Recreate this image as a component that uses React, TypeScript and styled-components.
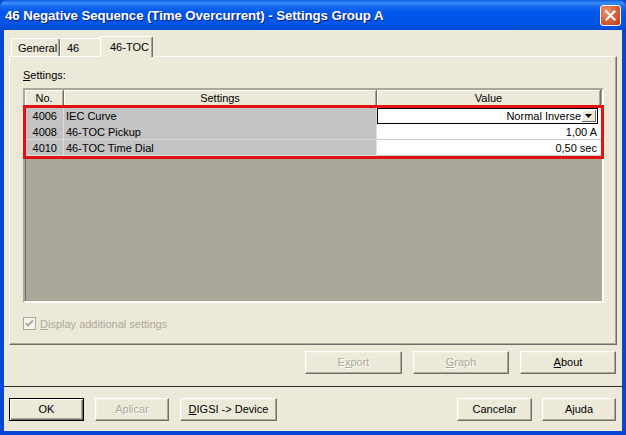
import React from "react";
import styled, { createGlobalStyle, css } from "styled-components";

const GlobalStyle = createGlobalStyle`
  html, body { margin: 0; padding: 0; background: #ECE9D8; }
  body { font-family: "Liberation Sans", Arial, sans-serif; font-size: 11px; color: #000; }
  * { box-sizing: border-box; }
`;

const Window = styled.div`
  width: 626px;
  height: 435px;
  display: flex;
  flex-direction: column;
  background: #0846d8;
  overflow: hidden;
`;

const TitleBar = styled.div`
  height: 30px;
  flex: none;
  display: flex;
  align-items: center;
  justify-content: space-between;
  padding: 0 5px 0 5px;
  background: linear-gradient(
    to bottom,
    #0a5ee0 0%,
    #3c8df5 10%,
    #1669ef 22%,
    #0058ee 40%,
    #0055e5 80%,
    #0048d2 100%
  );
  border-radius: 7px 7px 0 0;
`;

const TitleText = styled.span`
  color: #fff;
  font-family: "Liberation Sans", Arial, sans-serif;
  font-weight: bold;
  font-size: 13.3px;
  letter-spacing: -0.1px;
  text-shadow: 1px 1px 0 #0a1e80;
  white-space: nowrap;
`;

const CloseButton = styled.div`
  width: 21px;
  height: 21px;
  margin-top: 1px;
  border: 1px solid #fff;
  border-radius: 3px;
  background: radial-gradient(circle at 30% 30%, #ec9a7f 0%, #d9643f 45%, #c23b16 100%);
  display: flex;
  align-items: center;
  justify-content: center;
`;

const Client = styled.div`
  flex: 1;
  display: flex;
  flex-direction: column;
  margin: 0 4px 4px 4px;
  background: #ece9d8;
  padding: 0 0 10px 0;
`;

const TabStrip = styled.div`
  height: 26px;
  flex: none;
  display: flex;
  align-items: flex-end;
  padding-left: 7px;
`;

const Tab = styled.div<{ $w: number; $active?: boolean }>`
  position: relative;
  width: ${(p) => p.$w}px;
  height: 18px;
  display: flex;
  align-items: center;
  padding-left: 6px;
  background: #ece9d8;
  border-left: 1px solid #fff;
  border-top: 1px solid #fff;
  border-right: 1px solid #716f64;
  border-radius: 2px 2px 0 0;
  box-shadow: inset -1px 0 0 #aca899;
  white-space: nowrap;
  ${(p) =>
    p.$active &&
    css`
      height: 21px;
      margin: 0 -2px -1px -2px;
      padding-left: 9px;
      padding-bottom: 1px;
      z-index: 2;
    `}
`;

const TabPanel = styled.div`
  margin: 0 5px;
  height: 289px;
  flex: none;
  display: flex;
  flex-direction: column;
  background: #ece9d8;
  border-left: 1px solid #fff;
  border-top: 1px solid #fff;
  border-right: 1px solid #716f64;
  border-bottom: 1px solid #716f64;
  box-shadow: inset -1px -1px 0 #aca899;
  padding: 12px 12px 0 13px;
`;

const FieldLabel = styled.div`
  height: 13px;
  line-height: 13px;
  margin-bottom: 6px;
`;

const ListView = styled.div`
  height: 215px;
  display: flex;
  flex-direction: column;
  border: 2px solid;
  border-color: #aca899 #fff #fff #aca899;
  box-shadow: inset 1px 1px 0 #716f64;
  background: #aca899;
`;

const HeaderRow = styled.div`
  display: grid;
  grid-template-columns: 39px 313px 224px;
  height: 18px;
  flex: none;
`;

const HeaderCell = styled.div`
  display: flex;
  align-items: center;
  justify-content: center;
  background: #ece9d8;
  border-right: 1px solid #716f64;
  border-bottom: 1px solid #716f64;
  box-shadow: inset 1px 1px 0 #fff, inset -1px -1px 0 #aca899;
  padding-bottom: 1px;
`;

const RowsGroup = styled.div`
  position: relative;
  flex: none;
  &::after {
    content: "";
    position: absolute;
    left: -2px;
    right: -2px;
    top: -3px;
    bottom: -3px;
    border: 3px solid #e01212;
    pointer-events: none;
  }
`;

const Row = styled.div`
  display: grid;
  grid-template-columns: 39px 313px 224px;
  height: 16px;
`;

const Cell = styled.div<{ $align?: "left" | "right" }>`
  display: flex;
  align-items: center;
  justify-content: ${(p) => (p.$align === "right" ? "flex-end" : "flex-start")};
  padding: ${(p) => (p.$align === "right" ? "0 6px 0 0" : "0 0 0 2px")};
  background: #c3c3c3;
  border-bottom: 1px solid #dcdcdc;
  border-right: 1px solid #dcdcdc;
  white-space: nowrap;
`;

const ValueCell = styled.div`
  display: flex;
  align-items: center;
  justify-content: flex-end;
  padding-right: 4px;
  background: #fff;
  border-bottom: 1px solid #c8c8c8;
  white-space: nowrap;
`;

const Combo = styled.div`
  flex: 1;
  height: 16px;
  margin: 0 -1px 0 0;
  display: flex;
  align-items: center;
  justify-content: flex-end;
  border: 1px solid #000;
  background: #fff;
  padding: 1px;
`;

const ComboText = styled.span`
  padding-right: 1px;
`;

const ComboArrow = styled.div`
  width: 14px;
  height: 12px;
  display: flex;
  align-items: center;
  justify-content: center;
  background: #ece9d8;
  border-right: 1px solid #716f64;
  border-bottom: 1px solid #716f64;
  box-shadow: inset 1px 1px 0 #fff;
`;

const CheckRow = styled.div`
  display: flex;
  align-items: center;
  gap: 4px;
  margin-top: 14px;
  height: 13px;
  color: #aca899;
`;

const ButtonRow = styled.div<{ $between?: boolean }>`
  display: flex;
  align-items: center;
  justify-content: ${(p) => (p.$between ? "space-between" : "flex-end")};
  padding: 0 6px 0 5px;
  flex: none;
`;

const ButtonGroup = styled.div<{ $gap: number }>`
  display: flex;
  gap: ${(p) => p.$gap}px;
`;

const Button = styled.div<{ $w: number; $disabled?: boolean; $default?: boolean }>`
  width: ${(p) => p.$w}px;
  height: 23px;
  display: flex;
  align-items: center;
  justify-content: center;
  background: #ece9d8;
  border: 1px solid;
  border-color: #fff #716f64 #716f64 #fff;
  box-shadow: inset -1px -1px 0 #aca899, inset 1px 1px 0 #f1efe2;
  white-space: nowrap;
  padding-bottom: 1px;
  ${(p) =>
    p.$disabled &&
    css`
      color: #aca899;
      text-shadow: 1px 1px 0 #fff;
    `}
  ${(p) =>
    p.$default &&
    css`
      border-color: #000;
      box-shadow: inset 1px 1px 0 #fff, inset -1px -1px 0 #716f64, inset -2px -2px 0 #aca899;
    `}
`;

const Separator = styled.div`
  height: 1px;
  flex: none;
  background: #2b2b2b;
  margin: 12px 0 11px 0;
`;

const Row1 = styled(ButtonRow)`
  margin-top: 6px;
`;

type Setting = { no: string; name: string; value: string; combo?: boolean };

const settings: Setting[] = [
  { no: "4006", name: "IEC Curve", value: "Normal Inverse", combo: true },
  { no: "4008", name: "46-TOC Pickup", value: "1,00 A" },
  { no: "4010", name: "46-TOC Time Dial", value: "0,50 sec" },
];

export default function App() {
  return (
    <>
      <GlobalStyle />
      <Window>
        <TitleBar>
          <TitleText>46 Negative Sequence (Time Overcurrent) - Settings Group A</TitleText>
          <CloseButton>
            <svg width="11" height="11" viewBox="0 0 11 11">
              <path d="M1.5 1.5 L9.5 9.5 M9.5 1.5 L1.5 9.5" stroke="#fff" strokeWidth="2" strokeLinecap="square" />
            </svg>
          </CloseButton>
        </TitleBar>
        <Client>
          <TabStrip>
            <Tab $w={49}>General</Tab>
            <Tab $w={42}>46</Tab>
            <Tab $w={53} $active>
              46-TOC
            </Tab>
          </TabStrip>
          <TabPanel>
            <FieldLabel>
              <u>S</u>ettings:
            </FieldLabel>
            <ListView>
              <HeaderRow>
                <HeaderCell>No.</HeaderCell>
                <HeaderCell>Settings</HeaderCell>
                <HeaderCell>Value</HeaderCell>
              </HeaderRow>
              <RowsGroup>
                {settings.map((s) => (
                  <Row key={s.no}>
                    <Cell $align="right">{s.no}</Cell>
                    <Cell>{s.name}</Cell>
                    <ValueCell>
                      {s.combo ? (
                        <Combo>
                          <ComboText>{s.value}</ComboText>
                          <ComboArrow>
                            <svg width="7" height="4" viewBox="0 0 7 4">
                              <path d="M0 0 H7 L3.5 4 Z" fill="#000" />
                            </svg>
                          </ComboArrow>
                        </Combo>
                      ) : (
                        s.value
                      )}
                    </ValueCell>
                  </Row>
                ))}
              </RowsGroup>
            </ListView>
            <CheckRow>
              <svg width="13" height="13" viewBox="0 0 13 13">
                <rect x="0.5" y="0.5" width="12" height="12" fill="#f4f3ee" stroke="#aca899" />
                <path d="M3 6 L5 8.5 L10 3.5" stroke="#aca899" strokeWidth="2" fill="none" />
              </svg>
              <span>
                <u>D</u>isplay additional settings
              </span>
            </CheckRow>
          </TabPanel>
          <Row1>
            <ButtonGroup $gap={11}>
              <Button $w={97} $disabled>
                E<u>x</u>port
              </Button>
              <Button $w={96} $disabled>
                <u>G</u>raph
              </Button>
              <Button $w={96}>
                <u>A</u>bout
              </Button>
            </ButtonGroup>
          </Row1>
          <Separator />
          <ButtonRow $between>
            <ButtonGroup $gap={11}>
              <Button $w={75} $default>
                OK
              </Button>
              <Button $w={74} $disabled>
                Aplicar
              </Button>
              <Button $w={97}>
                <u>D</u>IGSI -&gt; Device
              </Button>
            </ButtonGroup>
            <ButtonGroup $gap={10}>
              <Button $w={75}>Cancelar</Button>
              <Button $w={74}>Ajuda</Button>
            </ButtonGroup>
          </ButtonRow>
        </Client>
      </Window>
    </>
  );
}
